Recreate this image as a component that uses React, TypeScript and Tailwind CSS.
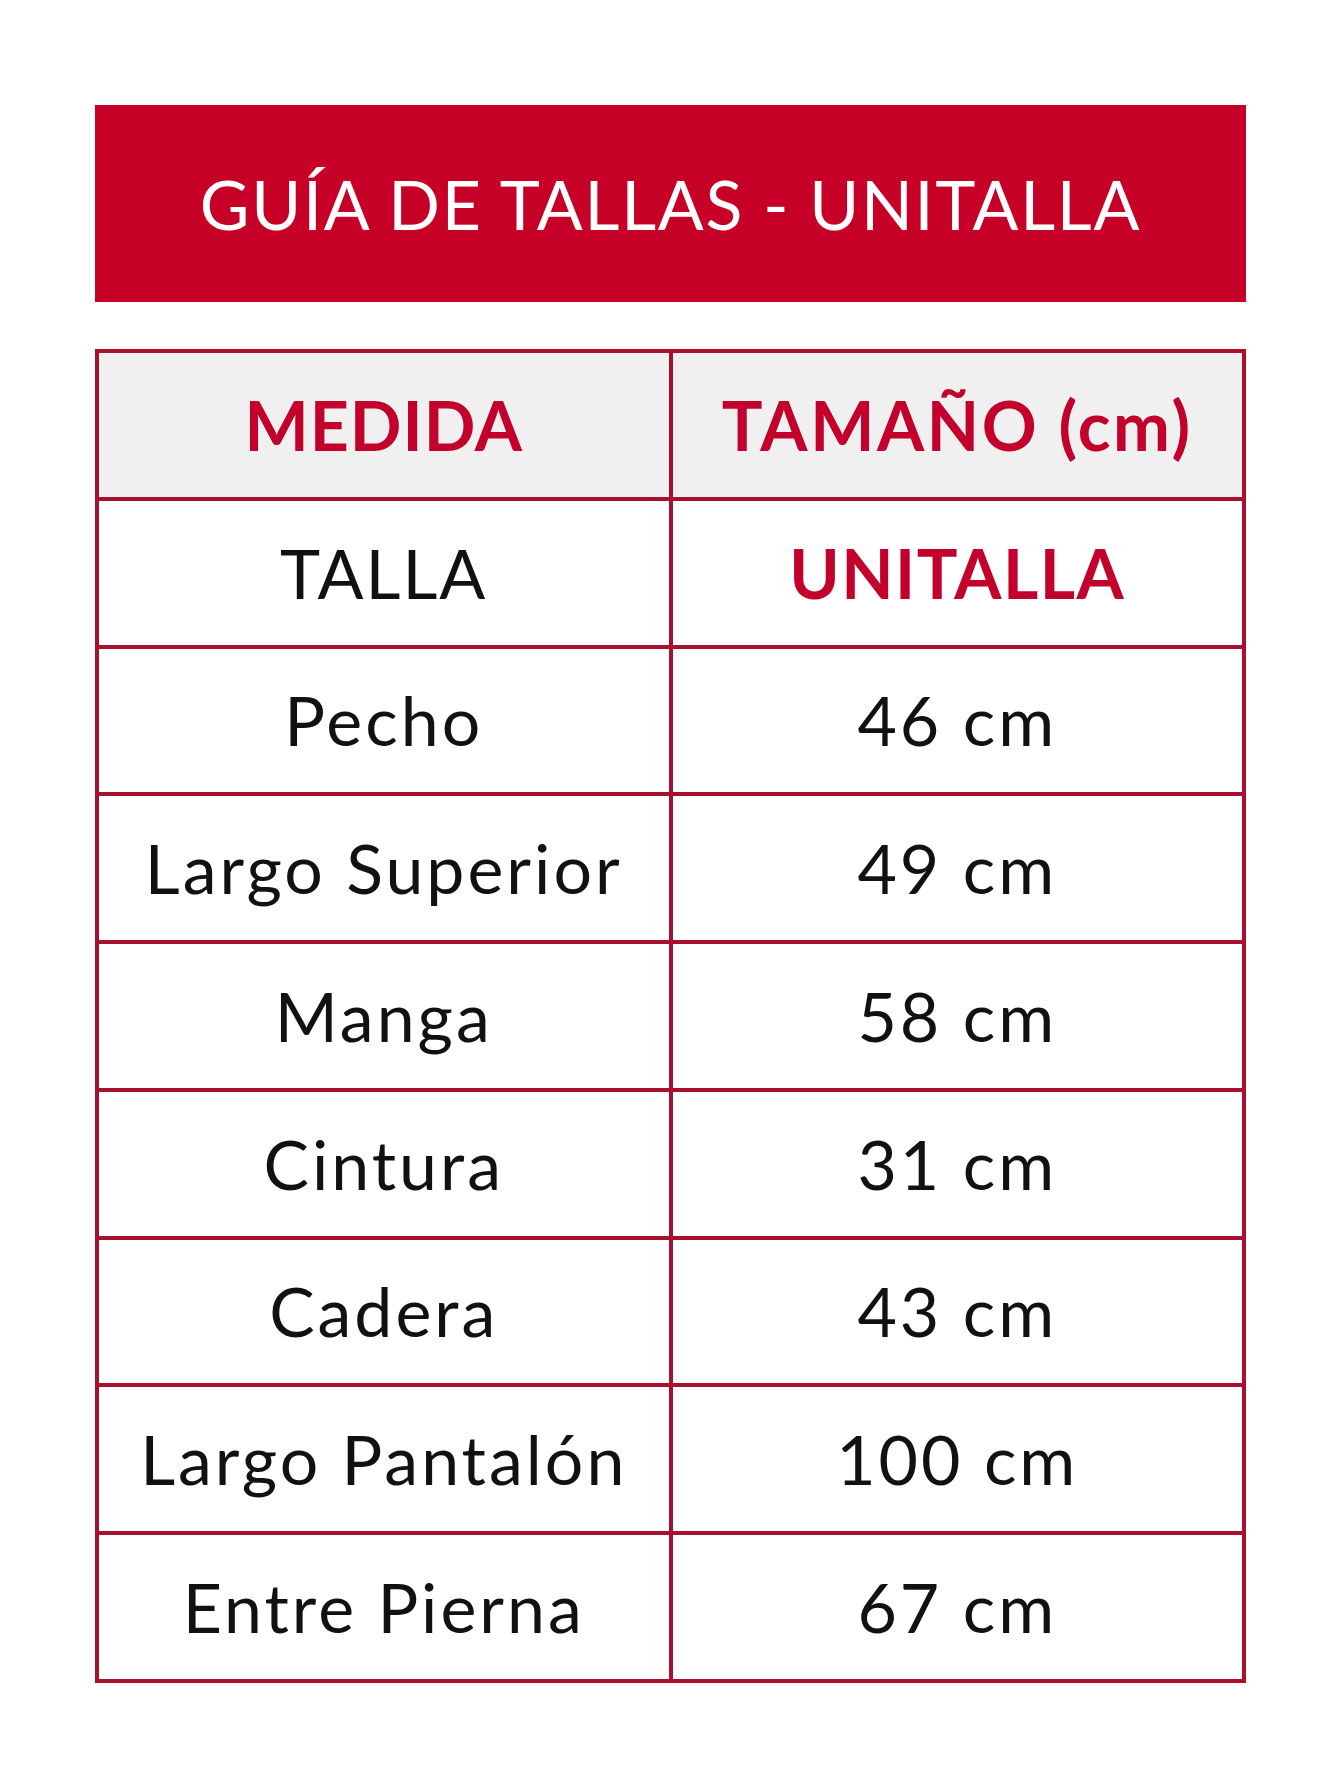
import React from 'react';

const rows: [string, string][] = [
    ['Pecho', '46 cm'],
    ['Largo Superior', '49 cm'],
    ['Manga', '58 cm'],
    ['Cintura', '31 cm'],
    ['Cadera', '43 cm'],
    ['Largo Pantalón', '100 cm'],
    ['Entre Pierna', '67 cm'],
];

function Cell({ children, className = '' }: { children: React.ReactNode; className?: string }) {
    return (
        <div className={`h-[143.75px] flex items-center justify-center text-[68px] leading-none ${className}`}>
            {children}
        </div>
    );
}

export default function App() {
    return (
        <div className="min-h-[1785px] w-[1340px] bg-white pt-[105px] pl-[95px] font-['Lato','Noto_Sans',sans-serif]">
            <div className="w-[1151px]">
                {/* Title bar */}
                <div className="h-[197px] bg-[#c60026] flex items-center justify-center">
                    <h1 className="text-white text-[68px] leading-none tracking-[1.7px]">GUÍA DE TALLAS - UNITALLA</h1>
                </div>

                {/* Size table */}
                <div className="mt-[47px] w-[1151px] bg-[#a8102d] p-[4px] grid grid-cols-2 gap-[4px]">
                    <Cell className="bg-[#f0f0f0] font-bold text-[#c2002b] tracking-[1px]">MEDIDA</Cell>
                    <Cell className="bg-[#f0f0f0] font-bold text-[#c2002b] tracking-[2.6px]">TAMAÑO (cm)</Cell>
                    <Cell className="bg-white text-[#111] tracking-[2px]">TALLA</Cell>
                    <Cell className="bg-white font-bold text-[#c2002b] tracking-[1.5px]">UNITALLA</Cell>
                    {rows.map(([name, value]) => (
                        <React.Fragment key={name}>
                            <Cell className="bg-white text-[#111] tracking-[3px]">{name}</Cell>
                            <Cell className="bg-white text-[#111] tracking-[3px]">{value}</Cell>
                        </React.Fragment>
                    ))}
                </div>
            </div>
        </div>
    );
}
